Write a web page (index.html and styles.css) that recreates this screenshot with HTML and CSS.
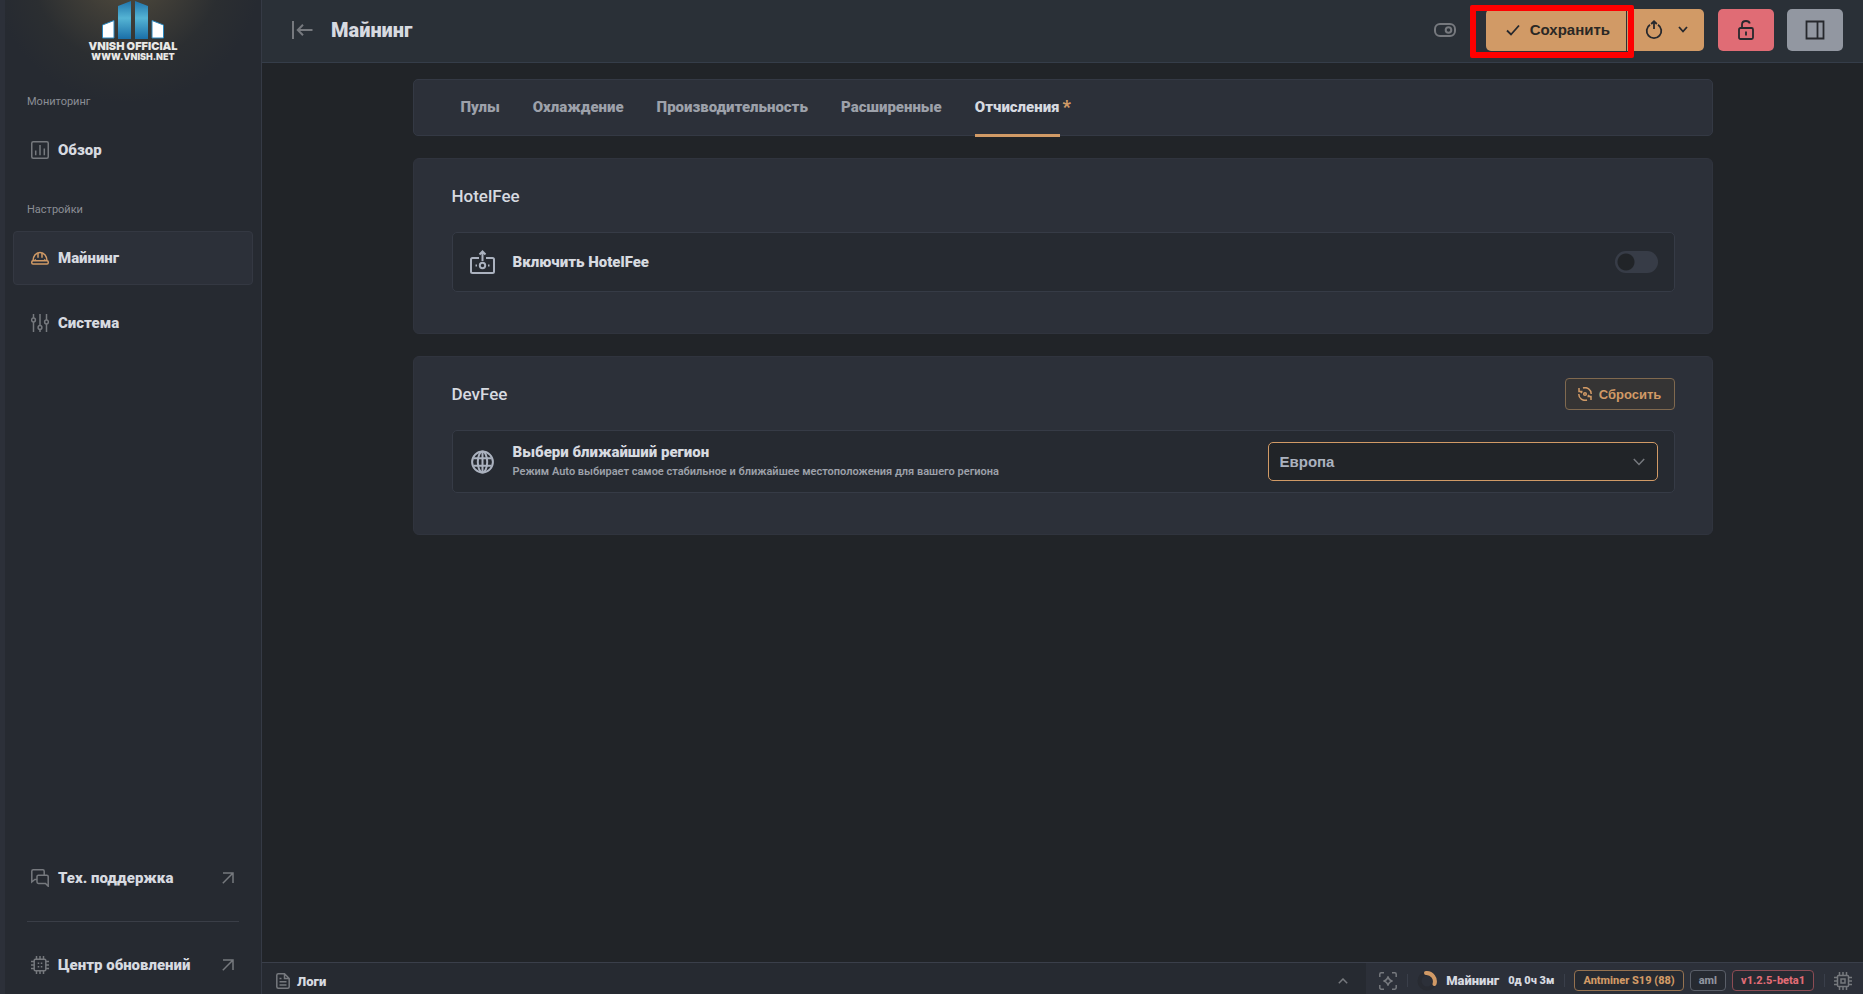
FILE: index.html
```html
<!DOCTYPE html>
<html lang="ru">
<head>
<meta charset="utf-8">
<title>Майнинг</title>
<link rel="stylesheet" href="styles.css">
</head>
<body>
<div class="app">
  <aside class="sidebar">
    <div class="logo">
      <svg class="logo-mark" width="64" height="40" viewBox="0 0 64 40">
        <defs>
          <linearGradient id="tower" x1="0" y1="0" x2="0" y2="1">
            <stop offset="0" stop-color="#1f74ab"/>
            <stop offset="0.45" stop-color="#55b4d4"/>
            <stop offset="1" stop-color="#1a6fa8"/>
          </linearGradient>
        </defs>
        <path d="M17 6 30 1v38H17z" fill="url(#tower)"/>
        <path d="M34 1 47 6v33H34z" fill="url(#tower)"/>
        <path d="M1.500 25 13 20.500v17.500H1.500z" fill="#fff" stroke="#2a86bd"/>
        <path d="M51 20.500 62.500 25v13H51z" fill="#fff" stroke="#2a86bd"/>
      </svg>
      <span class="logo-name">VNISH OFFICIAL</span>
      <span class="logo-site">WWW.VNISH.NET</span>
    </div>
    <nav class="nav">
      <h2 class="nav-title">Мониторинг</h2>
      <a class="nav-item" href="#overview">
        <svg class="icon" width="18" height="18" viewBox="0 0 18 18"><rect x="0.75" y="0.75" width="16.5" height="16.5" rx="1.5"/><path d="M4.7 9.5v4.8M9 4v10.3M13.3 7.500v6.800"/></svg>
        <span>Обзор</span>
      </a>
      <h2 class="nav-title">Настройки</h2>
      <a class="nav-item nav-item-active" href="#mining">
        <svg class="icon icon-accent" width="18" height="18" viewBox="0 0 18 18"><path d="M2 11.800c0-4.500 2.800-8.300 7-8.300s7 3.800 7 8.300"/><rect x="0.750" y="11.800" width="16.500" height="3.200" rx="1.200"/><path d="M7 3.800v5M11 3.800v5M4.300 10.200v1.600M13.700 10.200v1.600"/></svg>
        <span>Майнинг</span>
      </a>
      <a class="nav-item" href="#system">
        <svg class="icon" width="18" height="20" viewBox="0 0 18 20"><path d="M2.500 1v4M2.500 9v10M9 1v11M9 16v3M15.500 1v6M15.500 11v8"/><circle cx="2.500" cy="7" r="1.900"/><circle cx="9" cy="14.500" r="1.900"/><circle cx="15.500" cy="9" r="1.900"/></svg>
        <span>Система</span>
      </a>
    </nav>
    <div class="nav nav-bottom">
      <a class="nav-item" href="#support">
        <svg class="icon" width="18" height="18" viewBox="0 0 18 18"><path d="M6 10.500H3.800L.8 13V2.200C.8 1.300 1.300.8 2.200.8h9.600c.9 0 1.400.5 1.400 1.400v4M7.400 6.200h8.400c.9 0 1.400.5 1.400 1.400v9.600l-2.700-2.700H7.400c-.9 0-1.400-.5-1.400-1.400V7.600c0-.9.5-1.400 1.400-1.400z"/></svg>
        <span>Тех. поддержка</span>
        <svg class="icon icon-out" width="12" height="12" viewBox="0 0 12 12"><path d="M1 1h10v10M11 1 .8 11.200"/></svg>
      </a>
      <hr class="nav-rule">
      <a class="nav-item" href="#updates">
        <svg class="icon" width="18" height="18" viewBox="0 0 18 18"><rect x="3.200" y="3.200" width="11.600" height="11.600" rx="1.200"/><path d="M5.500 0v3M9 0v3M12.500 0v3M5.500 15v3M9 15v3M12.500 15v3M0 5.500h3M0 9h3M0 12.500h3M15 5.500h3M15 9h3M15 12.500h3M6.700 7.200h1.500M9.800 7.200h1.500M6.700 10.700h1.500M9.800 10.700h1.500"/></svg>
        <span>Центр обновлений</span>
        <svg class="icon icon-out" width="12" height="12" viewBox="0 0 12 12"><path d="M1 1h10v10M11 1 .8 11.200"/></svg>
      </a>
    </div>
  </aside>

  <div class="page">
    <header class="topbar">
      <button class="icon-button" type="button" aria-label="Свернуть меню">
        <svg class="icon icon-thick" width="21" height="18" viewBox="0 0 21 18"><path d="M1 0v18M20.500 9H6M11 3.800 5.800 9l5.200 5.200"/></svg>
      </button>
      <h1 class="page-title">Майнинг</h1>
      <div class="actions">
        <button class="icon-button view-switch" type="button" aria-label="Переключить вид">
          <svg class="icon" width="22" height="14" viewBox="0 0 22 14"><rect x="1" y="1" width="20" height="12" rx="5"/><circle cx="14.500" cy="7" r="2.800"/></svg>
        </button>
        <div class="save-group">
          <button class="save" type="button">
            <svg class="icon-dark" width="14" height="12" viewBox="0 0 14 12"><path d="m1 6.500 4 4L13 1.500"/></svg>
            <span>Сохранить</span>
          </button>
          <button class="restart" type="button" aria-label="Перезапуск">
            <svg class="icon-dark" width="18" height="20" viewBox="0 0 18 20"><path d="M5 4.700a7.300 7.300 0 1 0 8 0M9 9V2M6.200 4 9 1.300 11.800 4"/></svg>
            <svg class="icon-dark" width="10" height="7" viewBox="0 0 10 7"><path d="m1 1 4 4.500L9 1"/></svg>
          </button>
          <span class="highlight"></span>
        </div>
        <button class="square square-red" type="button" aria-label="Блокировка">
          <svg class="icon-dark" width="16" height="20" viewBox="0 0 16 20"><rect x="1" y="8" width="14" height="11" rx="1.500"/><path d="M4 8V4.500C4 2.300 5.600 1 8 1c1.800 0 3.400 1 3.800 2.500M8 11.500v4"/></svg>
        </button>
        <button class="square square-gray" type="button" aria-label="Боковая панель">
          <svg class="icon-dark" width="20" height="20" viewBox="0 0 20 20"><path d="M1.500 1.500h17v17h-17zM12.500 1.500v17"/></svg>
        </button>
      </div>
    </header>

    <main class="content">
      <div class="column">
        <nav class="tabs">
          <a class="tab" href="#pools">Пулы</a>
          <a class="tab" href="#cooling">Охлаждение</a>
          <a class="tab" href="#performance">Производительность</a>
          <a class="tab" href="#advanced">Расширенные</a>
          <a class="tab tab-active" href="#fees">Отчисления<span class="changed">*</span></a>
        </nav>

        <section class="card">
          <div class="card-head"><h2 class="card-title">HotelFee</h2></div>
          <div class="setting">
            <svg class="icon icon-light" width="25" height="24" viewBox="0 0 25 24"><path d="M9 8H2.500C1.500 8 1 8.500 1 9.500v12c0 1 .5 1.500 1.500 1.500h20c1 0 1.500-.5 1.500-1.500v-12c0-1-.5-1.500-1.500-1.500H16M12.500 11V2M9.500 4.500l3-3 3 3M5.500 15.500H7M18 15.500h1.500"/><circle cx="12.500" cy="15.500" r="2.700"/></svg>
            <label class="setting-title" for="hotel">Включить HotelFee</label>
            <input class="toggle" type="checkbox" id="hotel">
          </div>
        </section>

        <section class="card">
          <div class="card-head">
            <h2 class="card-title">DevFee</h2>
            <button class="reset" type="button">
              <svg class="icon-reset" width="14" height="14" viewBox="0 0 14 14"><path d="M5 1a6.200 6.200 0 0 1 8.200 6M1 1v3.500h3.500M1.500 4l2.500 2M9 13A6.200 6.200 0 0 1 .8 7M13 13V9.500H9.500M12.500 10 10 8"/><circle cx="7" cy="7" r="1.300"/></svg>
              <span>Сбросить</span>
            </button>
          </div>
          <div class="setting">
            <svg class="icon icon-light" width="25" height="24" viewBox="0 0 25 24"><circle cx="12.500" cy="12" r="10.400"/><ellipse cx="12.500" cy="12" rx="4.700" ry="10.400"/><path d="M12.500 2v20M3.500 8.200h18M3.500 15.800h18"/></svg>
            <div class="setting-text">
              <label class="setting-title" for="region">Выбери ближайший регион</label>
              <p class="setting-note">Режим Auto выбирает самое стабильное и ближайшее местоположения для вашего региона</p>
            </div>
            <div class="select-box">
              <select class="select" id="region"><option>Европа</option></select>
              <svg class="icon select-arrow" width="12" height="8" viewBox="0 0 12 8"><path d="m.8 1 5.200 5.500L11.200 1"/></svg>
            </div>
          </div>
        </section>
      </div>
    </main>

    <footer class="statusbar">
      <button class="logs" type="button">
        <svg class="icon" width="14" height="16" viewBox="0 0 14 16"><path d="M8.500.8H2.300C1.300.8.800 1.300.8 2.300v11.400c0 1 .5 1.500 1.500 1.500h9.400c1 0 1.500-.5 1.500-1.500V5.500zM8.500.8v4.700h4.700M3.500 5.500h2M3.500 8.800h7M3.500 12h7"/></svg>
        <span>Логи</span>
        <svg class="icon logs-arrow" width="10" height="6" viewBox="0 0 10 6"><path d="m.8 5.200L5 1l4.200 4.200"/></svg>
      </button>
      <div class="status">
        <svg class="icon" width="18" height="18" viewBox="0 0 18 18"><path d="M.8 5V2.200C.8 1.300 1.300.8 2.200.8H5M13 .8h2.800c.9 0 1.400.5 1.400 1.400V5M17.200 13v2.800c0 .9-.5 1.400-1.400 1.400H13M5 17.200H2.200c-.9 0-1.400-.5-1.400-1.400V13M9 4.500C9.600 7.500 10.500 8.400 13.500 9 10.500 9.600 9.600 10.500 9 13.500 8.400 10.500 7.500 9.600 4.500 9 7.500 8.400 8.400 7.500 9 4.500z"/></svg>
        <span class="rule"></span>
        <svg class="spinner" width="20" height="20" viewBox="0 0 20 20"><circle cx="10" cy="10" r="7.500" stroke="#282b32"/><path d="M9 2a8.500 8.500 0 0 1 8.500 11" stroke="#d19a66" stroke-linecap="round"/></svg>
        <span class="state">Майнинг</span>
        <span class="uptime">0д 0ч 3м</span>
        <span class="rule"></span>
        <div class="tags">
          <span class="tag tag-accent">Antminer S19 (88)</span>
          <span class="tag">aml</span>
          <span class="tag tag-red">v1.2.5-beta1</span>
        </div>
        <span class="rule"></span>
        <svg class="icon" width="18" height="18" viewBox="0 0 18 18"><rect x="3.500" y="3.500" width="11" height="11" rx="1"/><rect x="7" y="7" width="4" height="4"/><path d="M5.500 0v3M9 0v3M12.500 0v3M5.500 15v3M9 15v3M12.500 15v3M0 5.500h3M0 9h3M0 12.500h3M15 5.500h3M15 9h3M15 12.500h3"/></svg>
      </div>
    </footer>
  </div>
</div>
</body>
</html>
```

FILE: styles.css
```css
* { box-sizing: border-box; }

body {
  margin: 0;
  background: #212428;
  color: #d7dae0;
  font-family: Roboto, "Liberation Sans", sans-serif;
  font-size: 14px;
}

h1, h2, p { margin: 0; }
a { color: inherit; text-decoration: none; }
svg { flex: none; fill: none; }

button {
  padding: 0;
  border: 0;
  background: none;
  color: inherit;
  font: inherit;
}

.app { display: flex; height: 100vh; }

.icon { stroke: #76797e; stroke-width: 1.5; }
.icon-thick { stroke-width: 2; }
.icon-accent { stroke: #d19a66; }
.icon-light { stroke: #abb2bf; stroke-width: 2; }
.icon-dark { stroke: #26282d; stroke-width: 1.8; }

/* Sidebar */
.sidebar {
  display: flex;
  flex: none;
  flex-direction: column;
  width: 262px;
  border-left: 5px solid #2c3039;
  border-right: 1px solid #353a45;
  background: radial-gradient(circle at 122px -32px, #56503f 0, #3f3d37 50px, #2b2e31 95px, #262a31 135px);
}
.logo {
  display: flex;
  flex-direction: column;
  align-items: center;
  height: 85px;
  color: #e8e8e6;
  font-family: Inter, "Liberation Sans", sans-serif;
  font-weight: 900;
}
.logo-name { font-size: 11px; line-height: 12px; }
.logo-site { font-size: 9px; line-height: 10px; }
.nav { padding: 0 8px; }
.nav-title {
  height: 34px;
  padding: 8px 14px;
  color: #8b8e95;
  font-size: 11px;
  font-weight: 400;
  line-height: 18px;
}
.nav-item {
  display: flex;
  align-items: center;
  gap: 9px;
  height: 54px;
  margin: 4px 0 11px;
  padding: 0 18px 0 17px;
  border: 1px solid transparent;
  border-radius: 4px;
  font-size: 15px;
  font-weight: 900;
}
.nav-item + .nav-title { margin-top: 16px; }
.nav-item-active { border-color: #343842; background: #2c3039; }
.icon-out { margin-left: auto; }
.nav-bottom { margin-top: auto; }
.nav-rule { height: 1px; margin: 0 14px; border: 0; background: #3a3e47; }
.nav-bottom .nav-item { margin: 16px 0; }
.nav-bottom .nav-item:last-child { margin-bottom: 2px; }

/* Top bar */
.page { display: flex; flex: 1; flex-direction: column; min-width: 0; }
.topbar {
  display: flex;
  flex: none;
  align-items: center;
  height: 63px;
  padding: 0 20px 3px 30px;
  border-bottom: 1px solid #353d49;
  background: #2a3037;
}
.icon-button { display: flex; }
.page-title { margin-left: 18px; font-size: 20px; font-weight: 900; }
.actions { display: flex; align-items: center; margin-left: auto; }
.view-switch { margin-right: 30px; }
.view-switch .icon { stroke-width: 2; }
.save-group { position: relative; display: flex; gap: 1px; margin-right: 14px; }
.save, .restart {
  display: flex;
  align-items: center;
  height: 42px;
  background: #d19a66;
  color: #2a2825;
  font-family: "Liberation Sans", Arial, sans-serif;
  font-size: 15px;
  font-weight: 700;
}
.save { gap: 10px; padding: 0 16px 0 20px; border-radius: 5px 0 0 5px; }
.restart { gap: 15px; padding: 0 16px 0 18px; border-radius: 0 5px 5px 0; }
.highlight {
  position: absolute;
  top: -4px;
  left: -16px;
  width: 164px;
  height: 53px;
  border: 6px solid #fe0000;
  border-radius: 2px;
  pointer-events: none;
}
.square {
  display: flex;
  align-items: center;
  justify-content: center;
  width: 56px;
  height: 42px;
  border-radius: 5px;
}
.square-red { margin-right: 13px; background: #e06c75; }
.square-gray { background: #9297a1; }

/* Content */
.content { flex: 1; min-height: 0; padding: 16px 32px; overflow: auto; }
.column {
  display: flex;
  flex-direction: column;
  gap: 22px;
  max-width: 1300px;
  margin: 0 auto;
}
.tabs {
  display: flex;
  gap: 33px;
  height: 57px;
  padding: 0 47px;
  border: 1px solid #343944;
  border-radius: 5px;
  background: #2c3039;
}
.tab {
  position: relative;
  color: #9da1aa;
  font-size: 15px;
  font-weight: 900;
  line-height: 54px;
}
.tab-active { color: #d7dae0; }
.tab-active::after {
  content: "";
  position: absolute;
  right: 0;
  bottom: -2px;
  left: 0;
  height: 3px;
  background: #d19a66;
}
.changed { position: absolute; left: 100%; margin-left: 3px; color: #d19a66; font-size: 18px; }
.card {
  padding: 21px 37px 41px 38px;
  border: 1px solid #30343e;
  border-radius: 6px;
  background: #2c3039;
}
.card-head {
  display: flex;
  align-items: center;
  justify-content: space-between;
  height: 32px;
  margin-bottom: 20px;
}
.card-title { font-size: 17px; font-weight: 500; }
.setting {
  display: flex;
  align-items: center;
  gap: 18px;
  min-height: 60px;
  padding: 11px 16px 11px 17px;
  border: 1px solid #363b46;
  border-radius: 5px;
  background: #262a31;
}
.setting-title { display: block; font-size: 15px; font-weight: 900; line-height: 20px; }
.setting-note { color: #9da1aa; font-size: 11px; font-weight: 600; line-height: 19px; }
.toggle {
  width: 43px;
  height: 22px;
  margin: 0 0 0 auto;
  border-radius: 11px;
  background: radial-gradient(circle at 11px 11px, #212428 8px, #373c47 9px);
  appearance: none;
}
.reset {
  display: flex;
  align-items: center;
  justify-content: center;
  gap: 7px;
  width: 110px;
  height: 32px;
  border: 1px solid #80694f;
  border-radius: 4px;
  background: #353434;
  color: #d19a66;
  font-family: "Liberation Sans", Arial, sans-serif;
  font-size: 13px;
  font-weight: 700;
}
.icon-reset { stroke: #d19a66; stroke-width: 1.5; }
.select-box { position: relative; width: 390px; margin-left: auto; }
.select {
  display: block;
  width: 100%;
  height: 39px;
  padding: 0 11px;
  border: 1px solid #d19a66;
  border-radius: 5px;
  background: #212428;
  color: #abb2bf;
  font-family: "Liberation Sans", Arial, sans-serif;
  font-size: 15px;
  font-weight: 700;
  appearance: none;
}
.select-arrow { position: absolute; top: 16px; right: 13px; pointer-events: none; }

/* Status bar */
.statusbar {
  display: flex;
  flex: none;
  height: 32px;
  border-top: 1px solid #3a3f4a;
  background: #262a31;
}
.logs {
  display: flex;
  flex: 1;
  align-items: center;
  gap: 7px;
  padding: 5px 18px 0 14px;
  font-size: 13px;
  font-weight: 900;
}
.logs-arrow { margin-left: auto; }
.status {
  display: flex;
  align-items: center;
  padding: 4px 11px 0 13px;
  background: #2c3039;
  font-size: 13px;
  font-weight: 900;
}
.rule { width: 1px; height: 13px; margin: 0 9px 0 10px; background: #3a3f4a; }
.spinner { stroke-width: 4; margin: 0 9px 0 0; }
.uptime { margin-left: 9px; font-size: 11px; }
.tags { display: flex; gap: 6px; font-weight: 800; }
.tag {
  height: 21px;
  padding: 0 8px;
  border: 1px solid #5a5f69;
  border-radius: 4px;
  background: #262a31;
  color: #8f949e;
  font-size: 11px;
  line-height: 19px;
}
.tag-accent { border-color: #957250; color: #d19a66; }
.tag-red { border-color: #8c4c54; color: #e06c75; }
```
